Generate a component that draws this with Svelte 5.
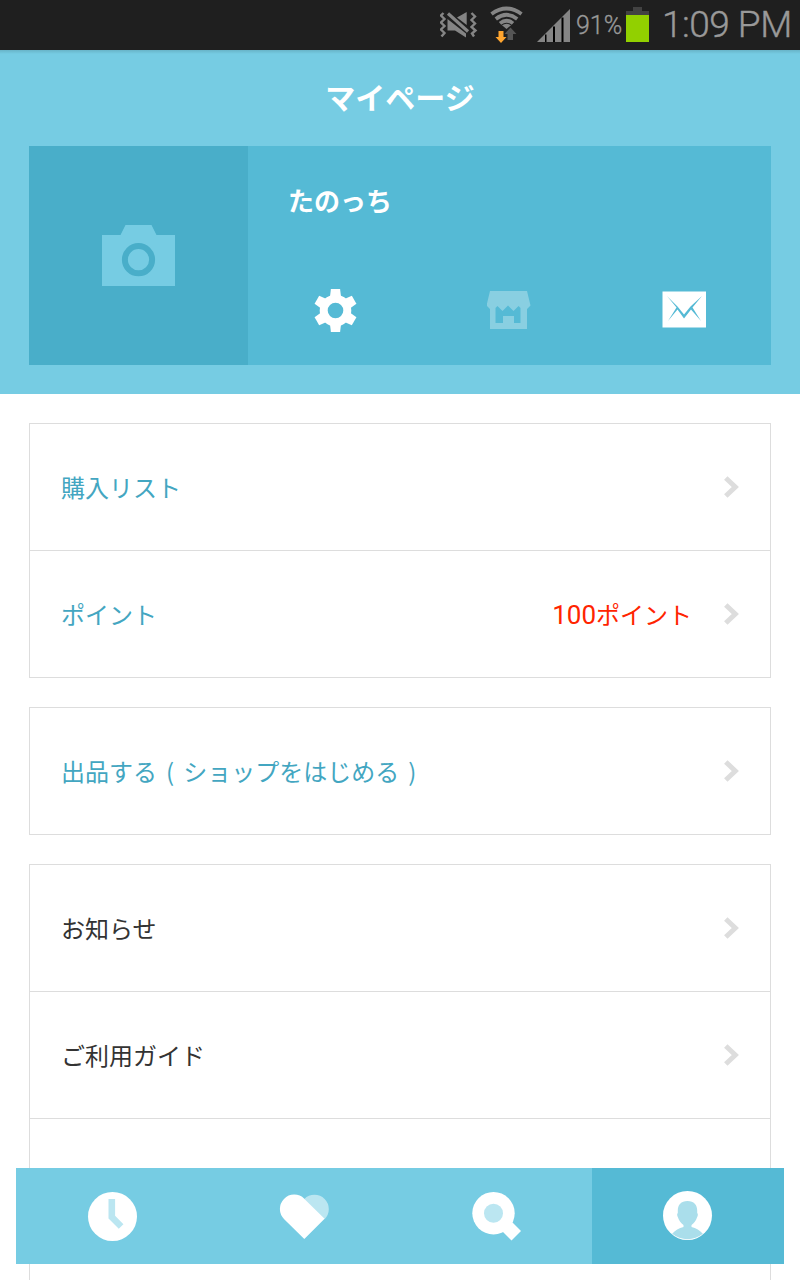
<script>
  const groups = [
    {
      accent: true,
      rows: [{ label: '購入リスト' }, { label: 'ポイント', points: 100 }]
    },
    {
      accent: true,
      rows: [{ label: '出品する ( ショップをはじめる )' }]
    },
    {
      accent: false,
      rows: [{ label: 'お知らせ' }, { label: 'ご利用ガイド' }, { label: '' }, { label: '' }]
    }
  ];

  const teeth = [0, 60, 120, 180, 240, 300];

  let active = $state('mypage');
</script>

<div class="screen">
  <div class="statusbar">
    <svg class="vibrate" width="38" height="26" viewBox="0 0 38 26">
      <path d="M7.500 7L26 21.500v4L15 18.500H7.500zM17 5.500L26.700 0v13z" fill="#858585" />
      <path d="M8 1.500L28 19.500" stroke="#858585" stroke-width="3.200" />
      <path
        d="M3.500 1L1 3.500 4.500 7 1 10.500 4.500 14 1 17.500 4.500 21l-3 3.500M31.500 1L35 4.500 31.500 8l3.500 3.500-3.500 3.500 4 3.500-3.500 3 2 3"
        fill="none"
        stroke="#858585"
        stroke-width="2.400"
      />
    </svg>
    <svg class="wifi" width="34" height="38" viewBox="0 0 34 38">
      <g fill="none" stroke="#858585" stroke-width="3.800">
        <path d="M1.500 8Q16.500-3 31.500 8" />
        <path d="M5.800 12.900Q16.500 4.700 27.200 12.900" />
        <path d="M10 17.400Q16.500 12 23 17.400" />
      </g>
      <path d="M12 19.300q4.500-3 9 0L16.500 23z" fill="#858585" />
      <path d="M8.500 25h5v6h3L11 37l-5.500-6h3z" fill="#ffa52f" />
      <path d="M17.500 34v-6h-3l6-6.500 6 6.500H23v6z" fill="#555" />
    </svg>
    <svg class="signal" width="33" height="33" viewBox="0 0 33 33">
      <path d="M0 33L33 0v33z" fill="#858585" />
      <path d="M8 25.500h1.500V33H8zM16 17.500h2V33h-2zM24.500 8.500h2V33h-2z" fill="#000" />
    </svg>
    <span class="percent">91%</span>
    <svg class="battery" width="23" height="35" viewBox="0 0 23 35">
      <path d="M7 0h9v4h7v4H0V4h7z" fill="#424242" />
      <path d="M0 8h23v27H0z" fill="#92d000" />
    </svg>
    <span class="time">1:09 PM</span>
  </div>

  <header>
    <h1>マイページ</h1>
    <div class="profile">
      <div class="photo">
        <svg width="73" height="61" viewBox="0 0 73 61">
          <path d="M0 10h18.500L23.500 0h26L54.500 10H73v51H0z" fill="#76cce3" />
          <circle cx="36.500" cy="34.700" r="13.600" fill="none" stroke="#49aec9" stroke-width="6" />
        </svg>
      </div>
      <div class="info">
        <p class="name">たのっち</p>
        <div class="actions">
          <svg width="43" height="44" viewBox="-21.500 -22.500 43 44">
            <circle r="11.800" fill="none" stroke="#fff" stroke-width="8" />
            {#each teeth as angle}
              <path d="M-4.600-21.500h9.200L5.600-13H-5.600z" fill="#fff" transform="rotate({angle})" />
            {/each}
          </svg>
          <svg width="45" height="38" viewBox="0.500 0 45 38">
            <path
              fill="#89cfe1"
              fill-rule="evenodd"
              d="M3.500 0h37L44 14.500 40.500 18v20h-37V18L0 14.500zM9 17v15h7.500v-7h11v7H34V17l-2-2-5 5-5.500-5.500L16 20l-5-5z"
            />
          </svg>
          <svg width="44" height="38" viewBox="-0.500 0 44 38">
            <path d="M0 .500h43.500v36H0z" fill="#fff" />
            <path d="M4.500 5L14 16.500 5.500 30 15 18.500l6.500 9 7-9L38.500 30 30 16.500 39.500 5 28 15.500l-6.500 8-6.500-8z" fill="#55bad5" />
          </svg>
        </div>
      </div>
    </div>
  </header>

  <main>
    {#each groups as group}
      <ul class:accent={group.accent}>
        {#each group.rows as row}
          <li>
            <span class="label">{row.label}</span>
            {#if row.points}
              <span class="points"><b>{row.points}</b>ポイント</span>
            {/if}
            <svg width="16" height="22" viewBox="0 0 16 22">
              <path d="M1.800 2l9.500 9-9.500 9" fill="none" stroke="#ddd" stroke-width="5" />
            </svg>
          </li>
        {/each}
      </ul>
    {/each}
  </main>

  <nav>
    <button aria-label="新着" class:active={active === 'new'} onclick={() => (active = 'new')}>
      <svg width="50" height="50" viewBox="0 0 50 50">
        <circle cx="25.500" cy="25.500" r="24.500" fill="#fff" />
        <path d="M24.800 8v18.200l9.300 9.300" fill="none" stroke="#bbe6f1" stroke-width="6.600" />
      </svg>
    </button>
    <button aria-label="お気に入り" class:active={active === 'like'} onclick={() => (active = 'like')}>
      <svg width="50" height="50" viewBox="0 0 50 50">
        <path d="M25.300 7.900A14.300 14.300 0 0 1 45.600 28.200z" fill="#bbe6f1" />
        <path d="M25.300 48L5.200 28.200A14.300 14.300 0 0 1 25.300 7.700l20.300 20z" fill="#fff" />
      </svg>
    </button>
    <button aria-label="検索" class:active={active === 'search'} onclick={() => (active = 'search')}>
      <svg width="50" height="50" viewBox="0 0 50 50">
        <path d="M28 37l9.500-9.500L50 40l-9.500 9.500z" fill="#fff" />
        <circle cx="22.500" cy="22.200" r="21.200" fill="#fff" />
        <circle cx="22.500" cy="22.200" r="9.500" fill="#bbe6f1" />
      </svg>
    </button>
    <button aria-label="マイページ" class:active={active === 'mypage'} onclick={() => (active = 'mypage')}>
      <svg width="50" height="50" viewBox="0 0 50 50">
        <circle cx="24.500" cy="24.500" r="24.500" fill="#fff" />
        <path
          fill="#aadeeb"
          d="M24.500 10c6.500 0 9.700 4 9.700 9.500v2.500c1 1 .8 3-.2 4.500-1 3-3 5.500-5.500 7.500v2c4.500 1.200 8.500 3.500 11.300 6.800a24.500 24.500 0 0 1-30.600 0c2.800-3.300 6.800-5.600 11.300-6.800v-2c-2.500-2-4.500-4.500-5.500-7.500-1-1.500-1.200-3.500-.2-4.500v-2.500c0-5.500 3.200-9.500 9.700-9.500z"
        />
      </svg>
    </button>
  </nav>
</div>

<style>
  :global(body) {
    margin: 0;
    background: #fff;
  }
  .screen {
    width: 800px;
    height: 1280px;
    overflow: hidden;
    position: relative;
    font-family: 'Noto Sans CJK JP', sans-serif;
    color: #333;
  }
  .statusbar {
    display: flex;
    align-items: flex-start;
    justify-content: flex-end;
    box-sizing: border-box;
    height: 50px;
    padding-right: 9px;
    background: #1f1f1f;
    color: #999;
    font-family: Roboto, sans-serif;
    font-weight: 300;
  }
  .vibrate {
    margin: 12px 12px 0 0;
  }
  .wifi {
    margin: 6px 13px 0 0;
  }
  .signal {
    margin: 9px 6px 0 0;
  }
  .percent {
    width: 46px;
    margin-right: 4px;
    font-size: 25px;
    line-height: 52px;
    white-space: nowrap;
    -webkit-text-stroke: 0.3px #999;
  }
  .battery {
    margin: 7px 13px 0 0;
  }
  .time {
    width: 129px;
    font-size: 37px;
    line-height: 50px;
    letter-spacing: -0.5px;
    white-space: nowrap;
    -webkit-text-stroke: 0.4px #999;
  }
  header {
    box-sizing: border-box;
    height: 344px;
    padding: 0 29px;
    background: linear-gradient(#68b4c8, #76cce3 4px);
  }
  h1 {
    margin: 0;
    height: 96px;
    font-size: 30px;
    font-weight: 700;
    line-height: 92px;
    text-align: center;
    color: #fff;
  }
  .profile {
    display: flex;
    height: 219px;
    background: #55bad5;
  }
  .photo {
    display: flex;
    align-items: center;
    justify-content: center;
    width: 219px;
    background: #49aec9;
  }
  .info {
    flex: 1;
    padding: 36px 65px 0 40px;
  }
  .name {
    margin: 0;
    height: 106px;
    font-size: 26px;
    font-weight: 700;
    line-height: 36px;
    color: #fff;
  }
  .actions {
    display: flex;
    align-items: center;
    justify-content: space-between;
    padding-left: 26px;
  }
  main {
    padding: 29px 29px 0;
  }
  ul {
    list-style: none;
    margin: 0 0 29px;
    padding: 0;
    border: 1px solid #ddd;
  }
  li {
    display: flex;
    align-items: center;
    height: 126px;
    padding: 0 30px 0 31px;
    font-size: 24px;
  }
  li + li {
    border-top: 1px solid #ddd;
  }
  .label {
    flex: 1;
    padding-bottom: 1px;
    word-spacing: 3.7px;
  }
  .accent .label {
    color: #43a6c1;
  }
  .points {
    margin-right: 32px;
    padding-bottom: 1px;
    color: #ff2400;
  }
  .points b {
    font-family: Roboto, sans-serif;
    font-size: 26px;
    font-weight: 400;
    line-height: 1;
  }
  nav {
    position: absolute;
    left: 16px;
    right: 16px;
    bottom: 16px;
    display: flex;
    height: 96px;
    background: #76cce3;
  }
  button {
    display: flex;
    flex: 1;
    align-items: center;
    justify-content: center;
    padding: 0;
    border: 0;
    background: none;
  }
  button.active {
    background: #55bad5;
  }
</style>
